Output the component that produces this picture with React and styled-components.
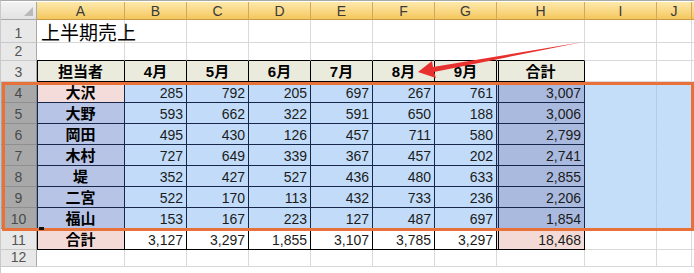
import React from "react";
import styled, { createGlobalStyle } from "styled-components";

const GlobalStyle = createGlobalStyle`
  html, body {
    margin: 0;
    padding: 0;
    background: #fff;
    overflow: hidden;
  }
`;

const GRID = "#d9d9d9";
const LINE = "#000";
const SEL_LINE = "#17274a";

const Frame = styled.div`
  position: relative;
  width: 694px;
  height: 273px;
  box-sizing: border-box;
  border-top: 1px solid #a9a9a9;
  border-left: 1px solid #c9c9c9;
  padding-top: 1px;
  background: #fff;
  overflow: hidden;
  font-family: "Liberation Sans", "Noto Sans CJK JP", sans-serif;
`;

const Sheet = styled.div`
  display: grid;
  grid-template-columns: 36px 88px repeat(6, 62px) 88px 72px 35px 1fr;
  grid-template-rows: 18px 23px 18px repeat(9, 21px);
`;

const Corner = styled.div`
  box-sizing: border-box;
  display: flex;
  justify-content: flex-end;
  align-items: flex-end;
  padding: 0 3px 3px 0;
  background: linear-gradient(#f3f3f3, #e2e2e2);
  border-right: 1px solid #a8a8a8;
  border-bottom: 1px solid #a8a8a8;

  &::after {
    content: "";
    width: 0;
    height: 0;
    border-left: 9px solid transparent;
    border-bottom: 9px solid #b9b9b9;
  }
`;

const ColHeader = styled.div`
  box-sizing: border-box;
  display: flex;
  align-items: center;
  justify-content: center;
  background: linear-gradient(#fde9ab 0%, #f9d783 55%, #f4c75c 100%);
  border-right: 1px solid #d2a95a;
  border-bottom: 1px solid #c99a45;
  font-size: 14px;
  color: #3a3a3a;
`;

const RowHeader = styled.div`
  box-sizing: border-box;
  display: flex;
  align-items: flex-end;
  justify-content: center;
  padding-bottom: 2px;
  line-height: 1;
  font-size: 14px;
  color: ${(p) => (p.$selected ? "#4a4a4a" : "#555")};
  background: ${(p) => (p.$selected ? "#a8a8a8" : "#e8e8e8")};
  border-right: 1px solid ${(p) => (p.$selected ? "#8a8a8a" : "#a9a9a9")};
  border-bottom: 1px solid ${(p) => (p.$selected ? "#8f8f8f" : "#c9c9c9")};
`;

const Cell = styled.div`
  box-sizing: border-box;
  display: flex;
  align-items: flex-end;
  justify-content: ${(p) => p.$align || "flex-end"};
  padding: 0 3px 2px 3px;
  line-height: 1;
  white-space: nowrap;
  font-size: 14px;
  font-weight: ${(p) => (p.$bold ? 700 : 400)};
  color: #1b1b1b;
  background: ${(p) => p.$bg || "transparent"};
  border-right: 1px solid ${(p) => p.$rc || GRID};
  border-bottom: 1px solid ${(p) => p.$bc || GRID};
  box-shadow: ${(p) => p.$shadow || "none"};
`;

const TitleCell = styled(Cell)`
  justify-content: flex-start;
  padding: 0 0 1px 4px;
  font-family: "Noto Sans CJK JP", sans-serif;
  font-size: 19px;
  color: #000;
  position: relative;
  z-index: 1;
`;

const LabelCell = styled(Cell)`
  justify-content: center;
  font-size: 15px;
  font-weight: 700;
  color: #000;
`;

const Selection = styled.div`
  position: absolute;
  left: 1px;
  top: 81px;
  width: 692px;
  height: 149px;
  box-sizing: border-box;
  border: 3px solid #e8713a;
  pointer-events: none;
`;

const FillHandle = styled.span`
  position: absolute;
  left: 38px;
  top: 226px;
  width: 5px;
  height: 3px;
  background: #111;
`;

const Arrow = styled.svg`
  position: absolute;
  left: 0;
  top: 0;
  pointer-events: none;
`;

const COLS = ["A", "B", "C", "D", "E", "F", "G", "H", "I", "J"];
const MONTHS = ["4月", "5月", "6月", "7月", "8月", "9月"];

const PEOPLE = [
  ["大沢", 285, 792, 205, 697, 267, 761, "3,007"],
  ["大野", 593, 662, 322, 591, 650, 188, "3,006"],
  ["岡田", 495, 430, 126, 457, 711, 580, "2,799"],
  ["木村", 727, 649, 339, 367, 457, 202, "2,741"],
  ["堤", 352, 427, 527, 436, 480, 633, "2,855"],
  ["二宮", 522, 170, 113, 432, 733, 236, "2,206"],
  ["福山", 153, 167, 223, 127, 487, 697, "1,854"],
];

const TOTALS = ["合計", "3,127", "3,297", "1,855", "3,107", "3,785", "3,297", "18,468"];

function cellLook(r, c) {
  const inTable = r >= 3 && r <= 11 && c <= 7;
  const selected = r >= 4 && r <= 10;
  let bg;
  if (selected) {
    if (c === 0) bg = r === 4 ? "#f3dcd9" : "#b7c4e5";
    else if (c <= 6) bg = "#c1dbf8";
    else if (c === 7) bg = "#aabadf";
    else bg = "#c4ddf9";
  } else if (r === 3 && c <= 7) bg = "#ebebdd";
  else if (r === 11 && (c === 0 || c === 7)) bg = "#f4dad6";

  let rc = GRID;
  let bc = GRID;
  const line = selected ? SEL_LINE : LINE;
  if (inTable) {
    rc = line;
    bc = line;
  } else if (selected && c >= 8) {
    rc = "#b3cbe9";
    bc = r < 10 ? bg : GRID;
  }
  if (r === 2 && c <= 7) bc = LINE;

  const shadows = [];
  if (inTable && c === 0) shadows.push(`inset 1px 0 0 ${line}`);
  if (inTable && c === 7) {
    shadows.push(`inset 1px 0 0 ${bg || "#fff"}`);
    shadows.push(`inset 2px 0 0 ${line}`);
  }
  return { $bg: bg, $rc: rc, $bc: bc, $shadow: shadows.join(", ") || undefined };
}

function cellContent(r, c) {
  if (r === 3 && c === 0) return { text: "担当者", label: true };
  if (r === 3 && c >= 1 && c <= 6) return { text: MONTHS[c - 1], label: true };
  if (r === 3 && c === 7) return { text: "合計", label: true };
  if (r >= 4 && r <= 10 && c <= 7) {
    const row = PEOPLE[r - 4];
    return { text: row[c], label: c === 0 };
  }
  if (r === 11 && c <= 7) return { text: TOTALS[c], label: c === 0 };
  return { text: "" };
}

const ROWS = Array.from({ length: 12 }, (_, i) => i + 1);

export default function App() {
  return (
    <>
      <GlobalStyle />
      <Frame>
        <Sheet>
          <Corner />
          {COLS.map((c) => (
            <ColHeader key={c}>{c}</ColHeader>
          ))}
          <ColHeader />

          {ROWS.map((r) => (
            <React.Fragment key={r}>
              <RowHeader $selected={r >= 4 && r <= 10}>{r}</RowHeader>
              {COLS.map((col, c) => {
                const look = cellLook(r, c);
                if (r === 1 && c === 0) {
                  return (
                    <TitleCell key={col} {...look}>
                      上半期売上
                    </TitleCell>
                  );
                }
                const { text, label } = cellContent(r, c);
                return label ? (
                  <LabelCell key={col} {...look}>
                    {text}
                  </LabelCell>
                ) : (
                  <Cell key={col} {...look}>
                    {text}
                  </Cell>
                );
              })}
              <Cell $rc="transparent" $bc={GRID} />
            </React.Fragment>
          ))}
        </Sheet>

        <Selection />
        <FillHandle />

        <Arrow width="694" height="273" viewBox="0 0 694 273">
          <polygon
            points="417,71 431,60 432,66 582,41 433,71 435,77"
            fill="#e8302e"
          />
        </Arrow>
      </Frame>
    </>
  );
}
